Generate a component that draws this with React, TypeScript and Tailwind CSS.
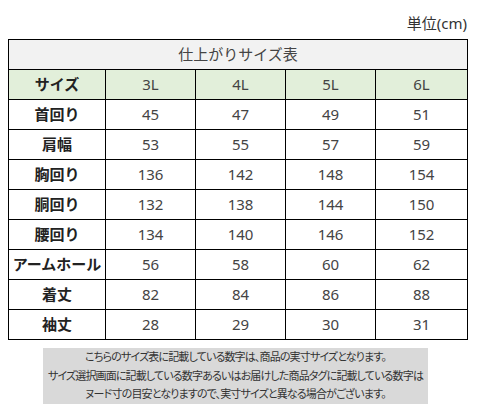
import React from "react";

const rows: [string, number[]][] = [
  ["首回り", [45, 47, 49, 51]],
  ["肩幅", [53, 55, 57, 59]],
  ["胸回り", [136, 142, 148, 154]],
  ["胴回り", [132, 138, 144, 150]],
  ["腰回り", [134, 140, 146, 152]],
  ["アームホール", [56, 58, 60, 62]],
  ["着丈", [82, 84, 86, 88]],
  ["袖丈", [28, 29, 30, 31]],
];

const sizes = ["3L", "4L", "5L", "6L"];

export default function App() {
  return (
    <div className="w-[479px] h-[409px] bg-white px-2 font-['Noto_Sans','Noto_Sans_CJK_JP',sans-serif] text-[#333]">
      <div className="flex justify-end pt-[14px] pr-[4px] text-[15px] leading-[18px] text-[#333]">
        単位(cm)
      </div>

      <table className="mt-[7px] w-[459px] table-fixed border-collapse border border-black text-center">
        <colgroup>
          <col className="w-[97px]" />
          <col className="w-[90px]" />
          <col className="w-[90px]" />
          <col className="w-[90px]" />
          <col className="w-[92px]" />
        </colgroup>
        <thead>
          <tr className="h-[30px] bg-[#f2f2f2]">
            <th colSpan={5} className="border border-black p-0 text-[15px] font-normal text-[#444]">
              仕上がりサイズ表
            </th>
          </tr>
          <tr className="h-[30px] bg-[#e2efda]">
            <th className="border border-black p-0 text-[15px] font-bold text-[#222]">サイズ</th>
            {sizes.map((s) => (
              <th key={s} className="border border-black p-0 text-[15px] font-normal text-[#444]">
                {s}
              </th>
            ))}
          </tr>
        </thead>
        <tbody>
          {rows.map(([label, vals]) => (
            <tr key={label} className="h-[30px]">
              <td className="border border-black p-0 text-[15px] font-bold text-[#222] whitespace-nowrap">
                {label}
              </td>
              {vals.map((v, i) => (
                <td key={i} className="border border-black p-0 text-[15px] text-[#444]">
                  {v}
                </td>
              ))}
            </tr>
          ))}
        </tbody>
      </table>

      <div className="mt-2 ml-[35px] w-[385px] bg-[#d9d9d9] text-center text-[11px] leading-[18.5px] tracking-[-0.85px] whitespace-nowrap text-[#333] [font-feature-settings:'palt']">
        <p>こちらのサイズ表に記載している数字は、商品の実寸サイズとなります。</p>
        <p>サイズ選択画面に記載している数字あるいはお届けした商品タグに記載している数字は</p>
        <p>ヌード寸の目安となりますので、実寸サイズと異なる場合がございます。</p>
      </div>
    </div>
  );
}
